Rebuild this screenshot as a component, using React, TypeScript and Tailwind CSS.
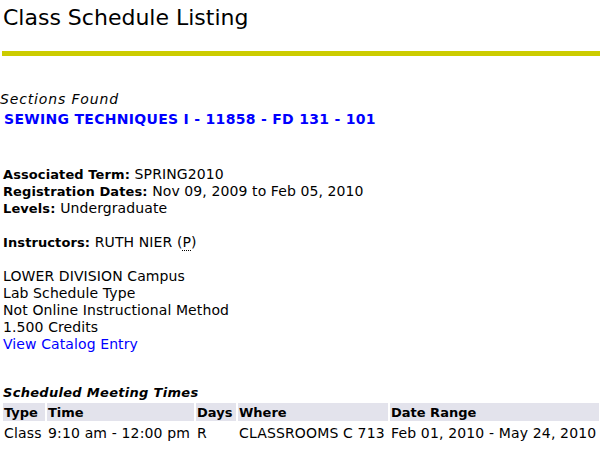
export default function App() {
  return (
    <div className="min-h-[453px] bg-white text-black font-['DejaVu_Sans',Verdana,sans-serif] text-[14px] leading-[17px]">
      {/* Title */}
      <h1 className="pl-[3px] pt-[4px] text-[22px] leading-[28px] font-normal">Class Schedule Listing</h1>
      <div className="ml-[2px] mt-[19px] h-[5px] bg-[#cccc00]" />

      {/* Section header */}
      <div className="mt-[35px] italic tracking-[0.85px]">Sections Found</div>
      <a href="#" className="block pl-[4px] mt-[3px] font-bold text-[#0000ff] tracking-[0.3px]">
        SEWING TECHNIQUES I - 11858 - FD 131 - 101
      </a>

      {/* Details */}
      <div className="pl-[3px] mt-[38px] tracking-[0.1px]">
        <div>
          <span className="font-bold text-[13px]">Associated Term: </span>SPRING2010
        </div>
        <div>
          <span className="font-bold text-[13px]">Registration Dates: </span>Nov 09, 2009 to Feb 05, 2010
        </div>
        <div>
          <span className="font-bold text-[13px]">Levels: </span>Undergraduate
        </div>
        <div className="mt-[17px]">
          <span className="font-bold text-[13px]">Instructors: </span>RUTH NIER (
          <abbr className="no-underline border-b border-dotted border-black">P</abbr>)
        </div>
        <div className="mt-[17px]">LOWER DIVISION Campus</div>
        <div>Lab Schedule Type</div>
        <div>Not Online Instructional Method</div>
        <div>1.500 Credits</div>
        <a href="#" className="block text-[#0000ff]">View Catalog Entry</a>
      </div>

      {/* Meeting times */}
      <div className="mt-[31px] pl-[3px] italic font-bold text-[13px] tracking-[0.3px]">Scheduled Meeting Times</div>
      <table className="ml-[1px] -mt-[1px] table-fixed border-separate border-spacing-x-[2px] border-spacing-y-[3px] w-[598px]">
        <colgroup>
          <col className="w-[42px]" />
          <col className="w-[147px]" />
          <col className="w-[40px]" />
          <col className="w-[150px]" />
          <col className="w-[209px]" />
        </colgroup>
        <thead>
          <tr className="text-[13px]">
            <th className="bg-[#e3e3ec] text-left font-bold px-[1px] h-[18px] p-0">Type</th>
            <th className="bg-[#e3e3ec] text-left font-bold px-[1px] p-0">Time</th>
            <th className="bg-[#e3e3ec] text-left font-bold px-[1px] p-0">Days</th>
            <th className="bg-[#e3e3ec] text-left font-bold px-[1px] p-0">Where</th>
            <th className="bg-[#e3e3ec] text-left font-bold px-[1px] p-0">Date Range</th>
          </tr>
        </thead>
        <tbody className="tracking-[0.15px] whitespace-nowrap">
          <tr>
            <td className="px-[1px] pt-[1px]">Class</td>
            <td className="px-[1px] pt-[1px]">9:10 am - 12:00 pm</td>
            <td className="px-[1px] pt-[1px]">R</td>
            <td className="px-[1px] pt-[1px]">CLASSROOMS C 713</td>
            <td className="px-[1px] pt-[1px]">Feb 01, 2010 - May 24, 2010</td>
          </tr>
        </tbody>
      </table>
    </div>
  );
}
